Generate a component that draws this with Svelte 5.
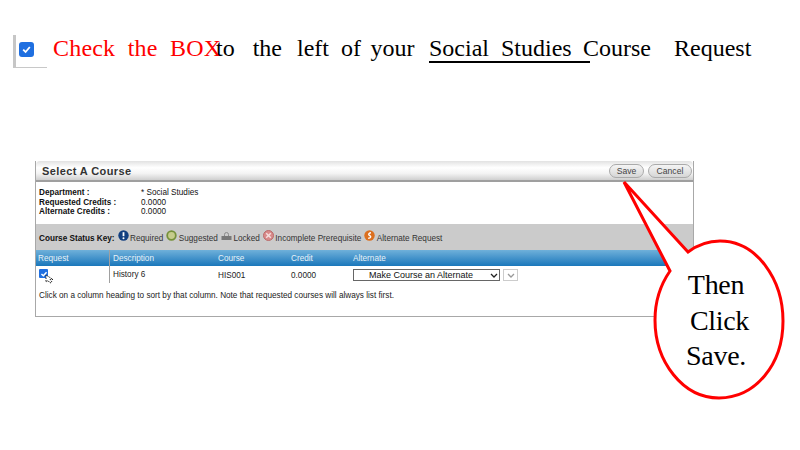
<script>
  const keys = [
    { cls: 'req', label: 'Required' },
    { cls: 'sug', label: 'Suggested' },
    { cls: 'lock', label: 'Locked' },
    { cls: 'inc', label: 'Incomplete Prerequisite' },
    { cls: 'alt', label: 'Alternate Request' }
  ];
</script>

<div class="page">
  <div class="instruction">
    <div class="shot">
      <span class="box"><svg width="11" height="11" viewBox="0 0 11 11"><path d="M2.2 5.6 4.6 8 8.8 3" fill="none" stroke="#fff" stroke-width="1.8"/></svg></span>
    </div>
    <span class="red">Check&nbsp; the&nbsp; BOX</span>
    <span class="t1">to&nbsp;&nbsp; the&nbsp; <span class="left">left</span>&nbsp; of <span class="your">your</span></span>
    <span class="t2">Social&nbsp; Studies&nbsp;&nbsp;</span>
    <span class="t3">Course</span>
    <span class="t4">Request</span>
  </div>

  <section class="panel">
    <header class="head">
      <h1>Select A Course</h1>
      <div class="btns"><button>Save</button><button>Cancel</button></div>
    </header>
    <div class="info">
      <b>Department :</b><span>* Social Studies</span>
      <b>Requested Credits :</b><span>0.0000</span>
      <b>Alternate Credits :</b><span>0.0000</span>
    </div>
    <div class="key">
      <b>Course Status Key:</b>
      {#each keys as k}
        <span class="item">
          <svg class="ico" width="11" height="11" viewBox="0 0 11 11">
            {#if k.cls === 'req'}
              <circle cx="5.500" cy="5.500" r="5.200" fill="#123f80"/>
              <path d="M5.500 2.200v4" stroke="#fff" stroke-width="1.800"/>
              <circle cx="5.500" cy="8.200" r="1" fill="#fff"/>
            {:else if k.cls === 'sug'}
              <circle cx="5.500" cy="5.500" r="4.300" fill="#c6cc8c" stroke="#76913a" stroke-width="1.800"/>
            {:else if k.cls === 'lock'}
              <path d="M3.500 6V4.500a2 2 0 0 1 4 0V6" fill="none" stroke="#8a8a8a"/>
              <rect x="0.500" y="6" width="10" height="4" fill="#777"/>
            {:else if k.cls === 'inc'}
              <circle cx="5.500" cy="5.500" r="5" fill="#d98a8a" stroke="#b96a6a"/>
              <path d="M3.200 3.200l4.600 4.600M7.800 3.200l-4.600 4.600" stroke="#f4dede" stroke-width="1.500"/>
            {:else}
              <circle cx="5.500" cy="5.500" r="5.200" fill="#dc6f1e"/>
              <path d="M7 2.800C4.500 2.800 4 5 5.800 5.600 7.300 6.200 6.800 8.300 4.200 8.200" fill="none" stroke="#fff" stroke-width="1.400"/>
            {/if}
          </svg>{k.label}
        </span>
      {/each}
    </div>
    <div class="grid th">
      <span class="first">Request</span><span class="sep">Description</span><span>Course</span><span>Credit</span><span>Alternate</span>
    </div>
    <div class="grid tr">
      <span class="cb">
        <span class="box small"><svg width="8" height="8" viewBox="0 0 11 11"><path d="M2 5.600 4.600 8 9 3" fill="none" stroke="#fff" stroke-width="2"/></svg></span>
        <svg class="cursor" width="9" height="10" viewBox="0 0 9 10"><path d="M1 1v7l2-1.500L5 9l2-1-2-2.500h3z" fill="#fff" stroke="#222" stroke-width="1" stroke-dasharray="1.500 1"/></svg>
      </span>
      <span class="sep short">History 6</span><span>HIS001</span><span>0.0000</span>
      <span class="selects">
        <span class="sel">Make Course an Alternate<svg width="8" height="5" viewBox="0 0 8 5"><path d="M1 1l3 3 3-3" fill="none" stroke="#222" stroke-width="1.300"/></svg></span>
        <span class="sel2"><svg width="8" height="5" viewBox="0 0 8 5"><path d="M1 1l3 3 3-3" fill="none" stroke="#999" stroke-width="1.300"/></svg></span>
      </span>
    </div>
    <p class="note">Click on a column heading to sort by that column. Note that requested courses will always list first.</p>
  </section>

  <div class="callout">
    <svg width="800" height="450" viewBox="0 0 800 450">
      <path d="M624 182 L688 252 C700 243 712 241 720 241 C757 241 783 280 783 321 C783 365 755 398 719 398 C683 398 655 362 655 320 C655 300 661 284 670 271 Z" fill="#fff" stroke="#f00" stroke-width="3"/>
    </svg>
    <div class="say"><span>Then</span><span class="c">Click</span><span>Save.</span></div>
  </div>
</div>

<style>
  :global(body) { margin: 0; background: #fff; }
  .page { position: relative; width: 800px; height: 450px; overflow: hidden; padding: 33px 0 0 13px; box-sizing: border-box; font-family: "Liberation Sans", Arial, sans-serif; }
  .instruction { display: flex; align-items: flex-start; height: 34px; font: 24px/30px "Liberation Serif", "Times New Roman", serif; color: #000; }
  .shot { width: 34px; height: 33px; margin-right: -4px; flex: none; box-sizing: border-box; border-left: 3px solid #c6c6c6; border-bottom: 1px solid #c8c8c8; padding: 7px 0 0 3px; margin-top: 2px; }
  .box { display: flex; align-items: center; justify-content: center; width: 15px; height: 15px; border-radius: 3px; background: #1f6fe0; }
  .box.small { width: 9px; height: 9px; border-radius: 1px; }
  .red { color: #f00; margin-left: 10px; width: 167px; white-space: nowrap; flex: none; letter-spacing: .2px; }
  .t1 { margin-left: -4px; width: 199px; white-space: nowrap; flex: none; }
  .left { margin-left: 3px; }
  .your { margin-left: 3.500px; }
  .t2 { margin-left: 14px; width: 161px; height: 28px; border-bottom: 2px solid #000; white-space: nowrap; flex: none; }
  .t3 { margin-left: -7px; width: 67px; flex: none; }
  .t4 { margin-left: 24px; flex: none; }

  .panel { width: 659px; height: 156px; margin: 94px 0 0 22px; box-sizing: border-box; border: 1px solid #a8a8a8; border-top: 0; font-size: 8.2px; color: #222; }
  .head { height: 21px; display: flex; justify-content: space-between; align-items: center; padding: 0 1px 0 6px; box-sizing: border-box; background: linear-gradient(#e2e2e2, #fff 35%, #f4f4f4 65%, #cfcfcf); border-bottom: 2px solid #9f9f9f; border-radius: 4px 4px 0 0; }
  h1 { margin: 0; font-size: 11px; font-weight: bold; letter-spacing: .4px; color: #333; }
  .btns { display: flex; gap: 4px; }
  button { height: 14px; padding: 0; font: 8.600px "Liberation Sans", sans-serif; color: #444; border: 1px solid #aaa; border-radius: 7px; background: linear-gradient(#f4f4f4, #d6d6d6); }
  button:first-child { width: 35px; }
  button:last-child { width: 44px; }
  .info { height: 42px; box-sizing: border-box; padding: 6px 0 0 3px; display: grid; grid-template-columns: 102px 1fr; grid-auto-rows: 9.500px; line-height: 9.500px; color: #111; }
  .key { height: 26px; background: #cbcbcb; display: flex; align-items: center; gap: 3px; padding: 2px 0 0 3px; box-sizing: border-box; white-space: nowrap; color: #333; }
  .key b { color: #111; }
  .item { display: inline-flex; align-items: center; }
  .ico { display: block; flex: none; margin: -5px 1.500px 0 0; }
  .grid { display: grid; grid-template-columns: 72px 109px 73px 62px 1fr; padding-left: 1px; align-items: center; }
  .th { height: 16px; background: linear-gradient(#6fb0da, #1a77bb); color: #e8f2f8; }
  .first { padding-left: 1px; }
  .tr { height: 19px; color: #222; align-items: start; line-height: 19px; }
  .sep { border-left: 1px solid #a0a0a0; padding-left: 3px; height: 100%; display: flex; align-items: center; }
  .sep.short { height: 17px; }
  .cb { position: relative; padding-left: 2px; height: 100%; display: flex; align-items: flex-start; padding-top: 3px; box-sizing: border-box; }
  .cursor { position: absolute; left: 8px; top: 8px; }
  .selects { display: flex; gap: 3px; align-items: center; padding-top: 3px; line-height: 10px; }
  .sel { width: 147px; height: 12px; box-sizing: border-box; border: 1px solid #666; padding: 0 1px 0 15px; display: flex; justify-content: space-between; align-items: center; color: #111; font-size: 9px; }
  .sel2 { width: 15px; height: 12px; box-sizing: border-box; border: 1px solid #ccc; display: flex; align-items: center; justify-content: center; }
  .note { margin: 6px 0 0 3px; color: #222; }

  .callout { position: absolute; inset: 0; pointer-events: none; }
  .say { position: absolute; left: 655px; top: 267px; width: 122px; display: flex; flex-direction: column; align-items: center; font: 28px/35.500px "Liberation Serif", serif; color: #000; letter-spacing: -.3px; }
  .c { margin-left: 7px; }
</style>
